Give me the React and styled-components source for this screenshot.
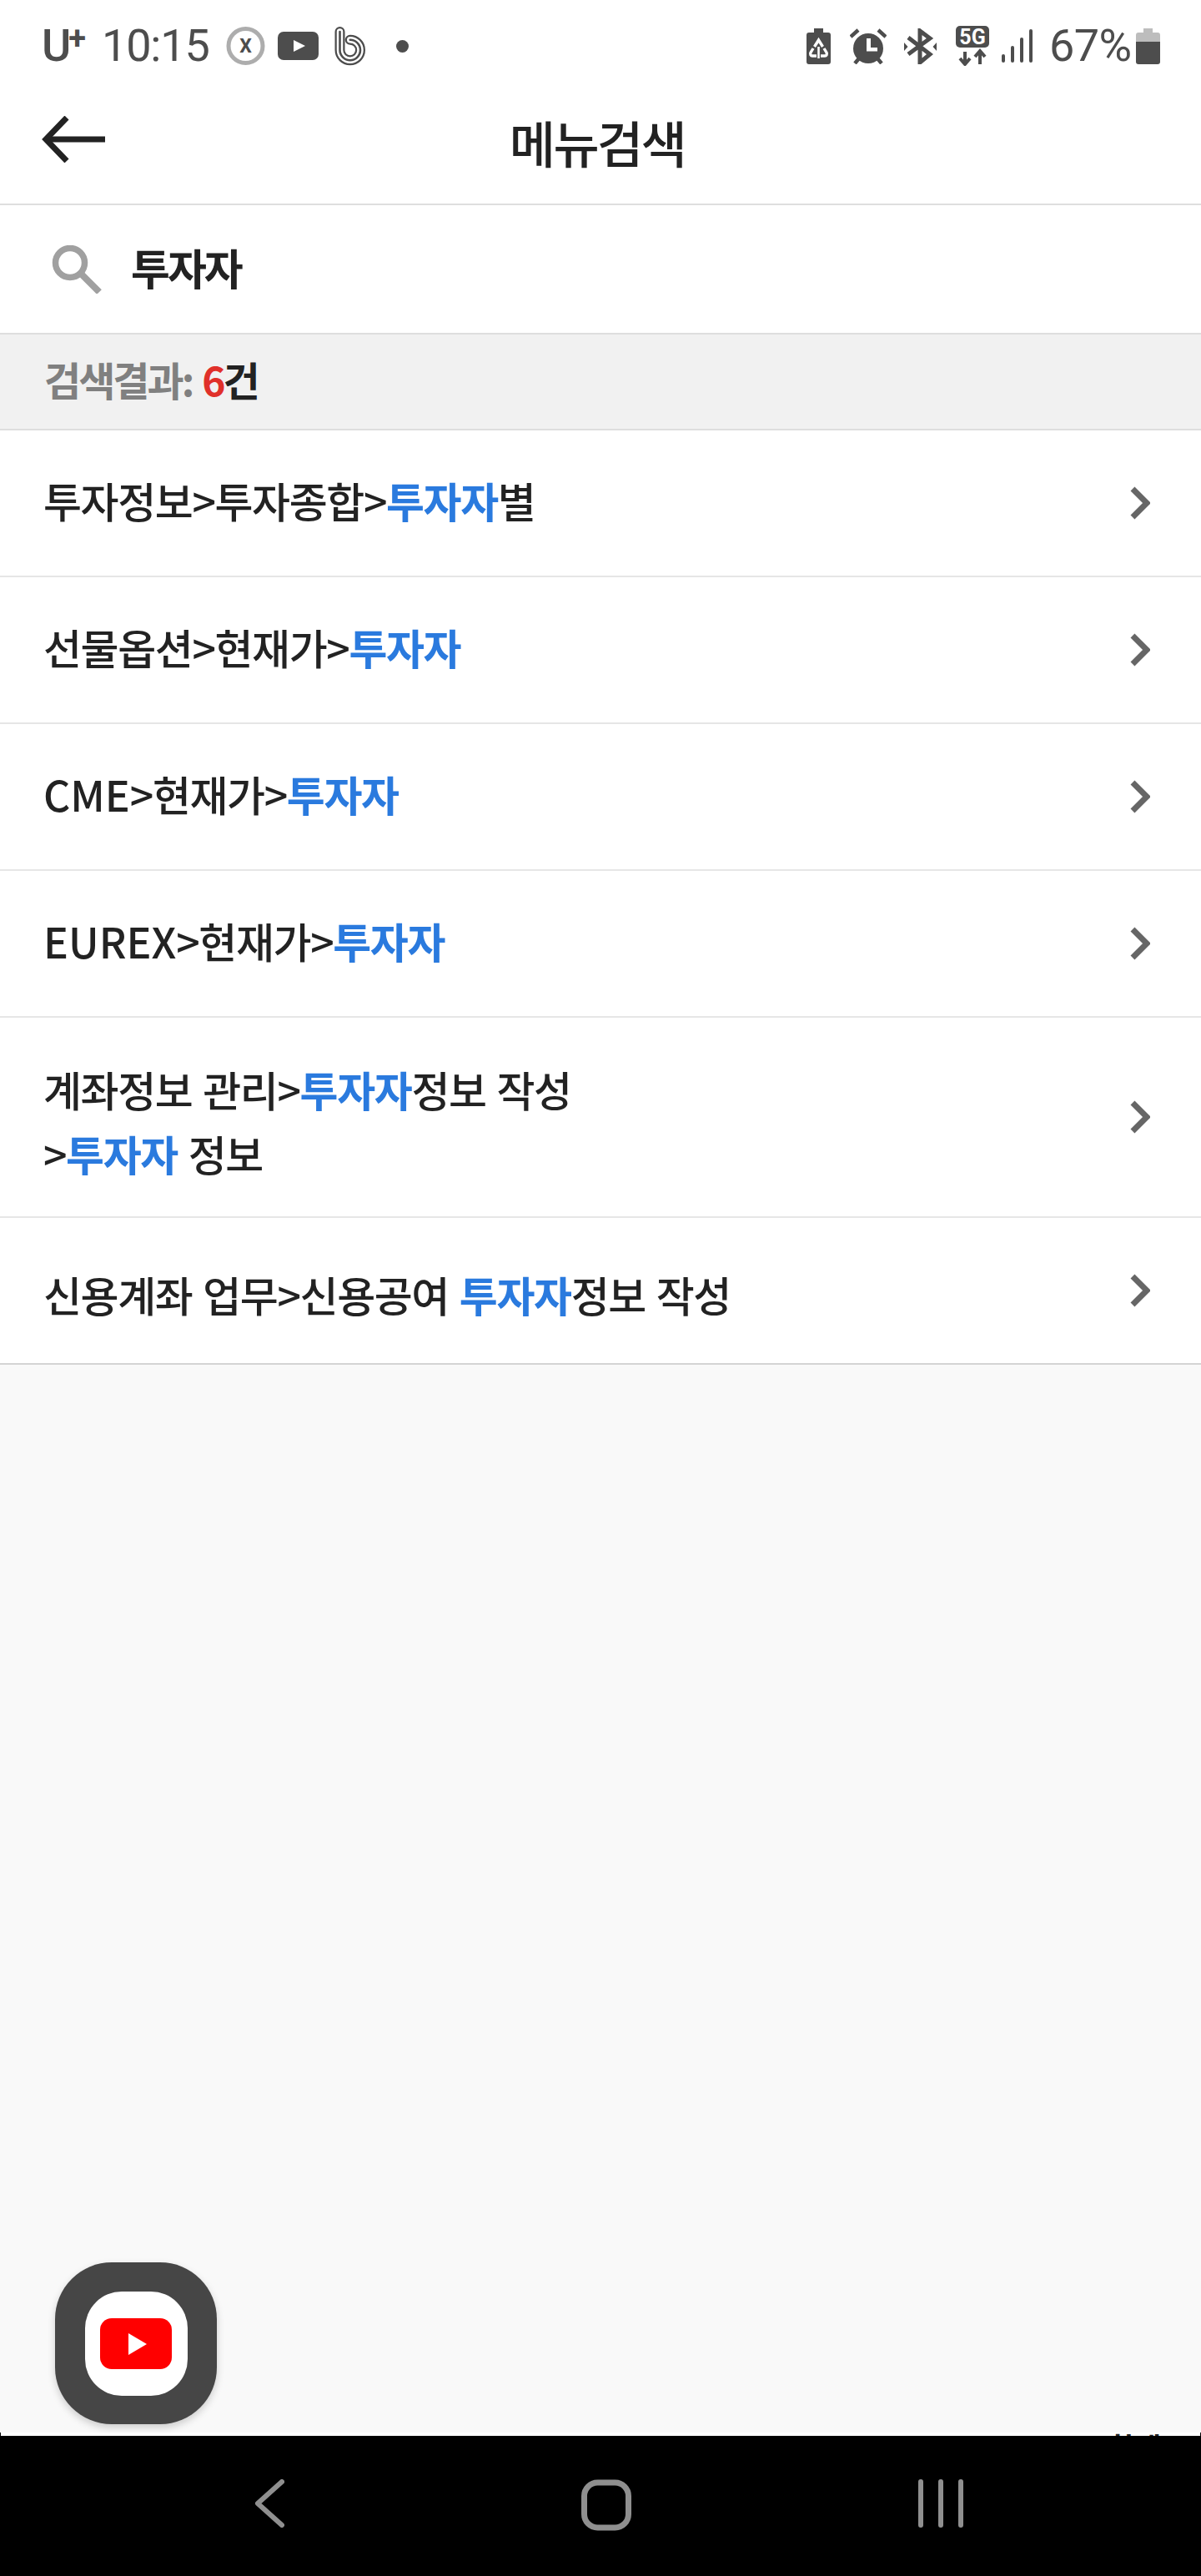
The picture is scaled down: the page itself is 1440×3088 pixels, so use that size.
import React from 'react'
import styled, { createGlobalStyle } from 'styled-components'

const GlobalStyle = createGlobalStyle`
  html, body {
    margin: 0;
    padding: 0;
    background: #f9f9f9;
  }
  * {
    box-sizing: border-box;
  }
`

const sans = `"Noto Sans CJK KR", "Noto Sans", sans-serif`

const Page = styled.div`
  position: relative;
  width: 1440px;
  height: 3088px;
  display: flex;
  flex-direction: column;
  background: #f9f9f9;
  font-family: ${sans};
  overflow: hidden;
`

const StatusBar = styled.div`
  height: 110px;
  flex: none;
  display: flex;
  justify-content: space-between;
  align-items: flex-start;
  padding: 30px 49px 0 50px;
  background: #fff;
  color: #4d4d4d;
`

const StatusGroup = styled.div`
  display: flex;
  align-items: center;
  height: 50px;
`

const Carrier = styled.span`
  font-family: Roboto, sans-serif;
  font-size: 54px;
  font-weight: 500;
  line-height: 50px;
  letter-spacing: -3px;
  margin-right: 19px;
  sup {
    font-size: 38px;
    line-height: 0;
    font-weight: 700;
    letter-spacing: 0;
    vertical-align: 14px;
  }
`

const Clock = styled.span`
  font-family: Roboto, sans-serif;
  font-size: 54px;
  line-height: 50px;
  letter-spacing: -1.2px;
  width: 130px;
  margin-right: 19px;
`

const Percent = styled.span`
  font-family: Roboto, sans-serif;
  font-size: 54px;
  line-height: 50px;
  letter-spacing: -0.6px;
  margin-left: 20px;
  width: 98px;
`

const StatusIcon = styled.span`
  display: block;
  flex: none;
  line-height: 0;
  margin-left: ${p => p.$left || 0}px;
`

const Dot = styled.span`
  flex: none;
  width: 15px;
  height: 15px;
  margin-left: 35px;
  border-radius: 50%;
  background: #4d4d4d;
`

const TitleBar = styled.header`
  height: 136px;
  flex: none;
  display: flex;
  align-items: center;
  justify-content: center;
  position: relative;
  background: #fff;
  border-bottom: 2px solid #dedede;
  padding: 0 8px 14px 0;
`

const BackButton = styled.button`
  position: absolute;
  left: 50px;
  top: 29px;
  padding: 0;
  border: 0;
  background: none;
  display: block;
  line-height: 0;
`

const Title = styled.h1`
  margin: 0;
  font-size: 60px;
  font-weight: 500;
  line-height: 70px;
  letter-spacing: -2.6px;
  color: #222;
`

const SearchBar = styled.div`
  height: 155px;
  flex: none;
  display: flex;
  align-items: center;
  gap: 35px;
  padding: 0 0 0 62px;
  background: #fff;
  border-bottom: 2px solid #dedede;
`

const SearchText = styled.span`
  font-size: 51px;
  font-weight: 700;
  letter-spacing: -3px;
  line-height: 60px;
  color: #222;
  margin-top: -5px;
`

const ResultBar = styled.div`
  height: 115px;
  flex: none;
  display: flex;
  align-items: center;
  padding: 0 0 8px 53px;
  background: #f1f1f1;
  border-bottom: 2px solid #dedede;
  font-size: 48px;
  font-weight: 700;
  letter-spacing: -3px;
  color: #222;
`

const Muted = styled.span`
  color: #808080;
  margin-right: 12px;
`

const Count = styled.span`
  color: #e0302a;
`

const List = styled.ul`
  margin: 0;
  padding: 0;
  list-style: none;
  background: #fff;
`

const Row = styled.li`
  display: flex;
  align-items: center;
  justify-content: space-between;
  height: ${p => (p.$tall ? 240 : 176)}px;
  padding: 0 61px 0 52px;
  border-bottom: 2px solid ${p => (p.$last ? '#d4d4d4' : '#e6e6e6')};
  font-size: 50px;
  font-weight: 500;
  line-height: 77px;
  letter-spacing: -1.4px;
  word-spacing: 3px;
  color: #222;
`

const Label = styled.span`
  margin-top: ${p => (p.$tall ? 10 : p.$last ? 8 : -8)}px;
`

const Latin = styled.span`
  letter-spacing: 0;
`

const Hit = styled.b`
  font-weight: 700;
  color: #2a7ade;
`

const Fab = styled.div`
  position: absolute;
  left: 66px;
  top: 2712px;
  width: 194px;
  height: 194px;
  border-radius: 68px;
  background: #464646;
  box-shadow: 0 4px 10px rgba(0, 0, 0, 0.18);
  display: flex;
  align-items: center;
  justify-content: center;
`

const FabInner = styled.div`
  width: 123px;
  height: 125px;
  border-radius: 44px;
  background: #fff;
  display: flex;
  align-items: center;
  justify-content: center;
`

const ClippedText = styled.div`
  position: absolute;
  right: 48px;
  top: 2916px;
  height: 4px;
  overflow: hidden;
  font-size: 34px;
  font-weight: 700;
  line-height: 34px;
  color: #222;
`

const Spacer = styled.div`
  flex: 1;
`

const WhiteStrip = styled.div`
  height: 4px;
  flex: none;
  background: #fff;
  border-left: 1px solid #000;
  border-right: 1px solid #000;
`

const NavBar = styled.nav`
  height: 168px;
  flex: none;
  background: #000;
  display: flex;
  align-items: flex-start;
  padding-top: 52px;
`

const NavSlot = styled.div`
  width: 60px;
  margin-left: ${p => p.$left}px;
  line-height: 0;
`

const IconX = () => (
  <svg width="47" height="46" viewBox="0 0 47 46" fill="none">
    <circle cx="23.5" cy="23" r="20.5" stroke="#adadad" strokeWidth="5" />
    <text x="23.5" y="31" textAnchor="middle" fontFamily="Roboto, sans-serif" fontWeight="700" fontSize="23" fill="#4d4d4d">X</text>
  </svg>
)

const IconYt = () => (
  <svg width="49" height="34" viewBox="0 0 49 34">
    <rect width="49" height="34" rx="7" fill="#4d4d4d" />
    <path d="M19 10l14 7-14 7z" fill="#fff" />
  </svg>
)

const bPath = 'M7.5 7V29A12.25 12.25 0 1 0 19.75 16.75'

const IconB = () => (
  <svg width="40" height="48" viewBox="0 0 40 48" fill="none" strokeLinecap="round">
    <path d={bPath} stroke="#4d4d4d" strokeWidth="12" />
    <path d={bPath} stroke="#fff" strokeWidth="7.5" />
    <path d={bPath} stroke="#4d4d4d" strokeWidth="2.6" />
  </svg>
)

const IconRecycle = () => (
  <svg width="29" height="43" viewBox="0 0 29 43">
    <path d="M9 0h11v5h6a3 3 0 0 1 3 3v32a3 3 0 0 1-3 3H3a3 3 0 0 1-3-3V8a3 3 0 0 1 3-3h6z" fill="#4d4d4d" />
    <g fill="none" stroke="#fff" strokeWidth="3.4">
      <path d="M9.5 22l5-8 5 8" />
      <path d="M8 24l-3 5c-1 2 0 4 2 4h5" />
      <path d="M21 24l3 5c1 2 0 4-2 4h-5" />
      <path d="M14.5 22v14" strokeWidth="2.6" />
    </g>
  </svg>
)

const IconAlarm = () => (
  <svg width="44" height="43" viewBox="0 0 44 43">
    <circle cx="22" cy="24" r="18" fill="#4d4d4d" />
    <path d="M20 12h5v11h8v4.500H20z" fill="#fff" />
    <path d="M1 10l9-8M43 10l-9-8M6 42l5-6M38 42l-5-6" stroke="#4d4d4d" strokeWidth="4.500" />
  </svg>
)

const IconBluetooth = () => (
  <svg width="39" height="43" viewBox="0 0 39 43" fill="none">
    <path d="M5 11l26 20-12 10V3l12 9L5 31" stroke="#4d4d4d" strokeWidth="5" />
    <path d="M0 17l4.500 5L0 27zM39 17l-4.500 5 4.500 5z" fill="#4d4d4d" />
  </svg>
)

const Icon5g = () => (
  <svg width="40" height="48" viewBox="0 0 40 48">
    <rect width="40" height="26" rx="5" fill="#4d4d4d" />
    <text x="20" y="22" textAnchor="middle" fontFamily="Roboto, sans-serif" fontWeight="700" fontSize="25" fill="#fff">5G</text>
    <path d="M11 31v15M5 39l6 7 6-7M29 46V31M23 37l6-7 6 7" fill="none" stroke="#4d4d4d" strokeWidth="4" />
  </svg>
)

const IconSignal = () => (
  <svg width="37" height="40" viewBox="0 0 37 40" fill="#4d4d4d">
    <rect x="0" y="30" width="4" height="10" rx="2" />
    <rect x="11" y="20" width="4" height="20" rx="2" />
    <rect x="22" y="10" width="4" height="30" rx="2" />
    <rect x="33" y="0" width="4" height="40" rx="2" />
  </svg>
)

const IconBattery = () => (
  <svg width="29" height="43" viewBox="0 0 29 43">
    <path d="M9 0h11v5h6a3 3 0 0 1 3 3v8H0V8a3 3 0 0 1 3-3h6z" fill="#bdbdbd" />
    <path d="M0 16h29v24a3 3 0 0 1-3 3H3a3 3 0 0 1-3-3z" fill="#4d4d4d" />
  </svg>
)

const Chevron = () => (
  <svg width="24" height="40" viewBox="0 0 24 40" fill="none">
    <path d="M3 3l17 17L3 37" stroke="#666" strokeWidth="7" />
  </svg>
)

const rows = [
  { id: 1, parts: ['투자정보>투자종합>', <Hit key="h">투자자</Hit>, '별'] },
  { id: 2, parts: ['선물옵션>현재가>', <Hit key="h">투자자</Hit>] },
  { id: 3, parts: [<Latin key="l">CME</Latin>, '>현재가>', <Hit key="h">투자자</Hit>] },
  { id: 4, parts: [<Latin key="l">EUREX</Latin>, '>현재가>', <Hit key="h">투자자</Hit>] },
  {
    id: 5,
    tall: true,
    parts: ['계좌정보 관리>', <Hit key="h">투자자</Hit>, '정보 작성', <br key="b" />, '>', <Hit key="i">투자자</Hit>, ' 정보'],
  },
  { id: 6, last: true, parts: ['신용계좌 업무>신용공여 ', <Hit key="h">투자자</Hit>, '정보 작성'] },
]

export default function App() {
  return (
    <>
      <GlobalStyle />
      <Page>
        <StatusBar>
          <StatusGroup>
            <Carrier>U<sup>+</sup></Carrier>
            <Clock>10:15</Clock>
            <StatusIcon><IconX /></StatusIcon>
            <StatusIcon $left={15}><IconYt /></StatusIcon>
            <StatusIcon $left={18}><IconB /></StatusIcon>
            <Dot />
          </StatusGroup>
          <StatusGroup>
            <StatusIcon><IconRecycle /></StatusIcon>
            <StatusIcon $left={23}><IconAlarm /></StatusIcon>
            <StatusIcon $left={21}><IconBluetooth /></StatusIcon>
            <StatusIcon $left={23}><Icon5g /></StatusIcon>
            <StatusIcon $left={15}><IconSignal /></StatusIcon>
            <Percent>67%</Percent>
            <StatusIcon $left={6}><IconBattery /></StatusIcon>
          </StatusGroup>
        </StatusBar>
        <TitleBar>
          <BackButton aria-label="뒤로">
            <svg width="76" height="56" viewBox="0 0 76 56" fill="none" stroke="#222" strokeWidth="7">
              <path d="M76 28H5" />
              <path d="M30 2L5 28l25 26" />
            </svg>
          </BackButton>
          <Title>메뉴검색</Title>
        </TitleBar>
        <SearchBar>
          <svg width="60" height="58" viewBox="0 0 60 58" fill="none" stroke="#a0a0a0">
            <circle cx="22" cy="21" r="17.500" strokeWidth="7.500" />
            <path d="M34 33l23 23" strokeWidth="8" />
          </svg>
          <SearchText>투자자</SearchText>
        </SearchBar>
        <ResultBar>
          <Muted>검색결과:</Muted>
          <Count>6</Count>건
        </ResultBar>
        <List>
          {rows.map(r => (
            <Row key={r.id} $tall={r.tall} $last={r.last}>
              <Label $tall={r.tall} $last={r.last}>{r.parts}</Label>
              <Chevron />
            </Row>
          ))}
        </List>
        <Spacer />
        <WhiteStrip />
        <NavBar>
          <NavSlot $left={305}>
            <svg width="36" height="58" viewBox="0 0 36 58" fill="none" stroke="#8f8f8f" strokeWidth="6" strokeLinecap="round" strokeLinejoin="round">
              <path d="M33 3L4 29l29 26" />
            </svg>
          </NavSlot>
          <NavSlot $left={332}>
            <svg width="60" height="62" viewBox="0 0 60 62" fill="none" stroke="#8f8f8f" strokeWidth="7">
              <rect x="3.500" y="4" width="53" height="54" rx="16" />
            </svg>
          </NavSlot>
          <NavSlot $left={343}>
            <svg width="56" height="58" viewBox="0 0 56 58" fill="none" stroke="#8f8f8f" strokeWidth="6" strokeLinecap="round">
              <path d="M4 3v52M28 3v52M52 3v52" />
            </svg>
          </NavSlot>
        </NavBar>
        <ClippedText>합계</ClippedText>
        <Fab>
          <FabInner>
            <svg width="86" height="61" viewBox="0 0 86 61">
              <rect width="86" height="61" rx="14" fill="#f00" />
              <path d="M34 18l22 13-22 13z" fill="#fff" />
            </svg>
          </FabInner>
        </Fab>
      </Page>
    </>
  )
}
